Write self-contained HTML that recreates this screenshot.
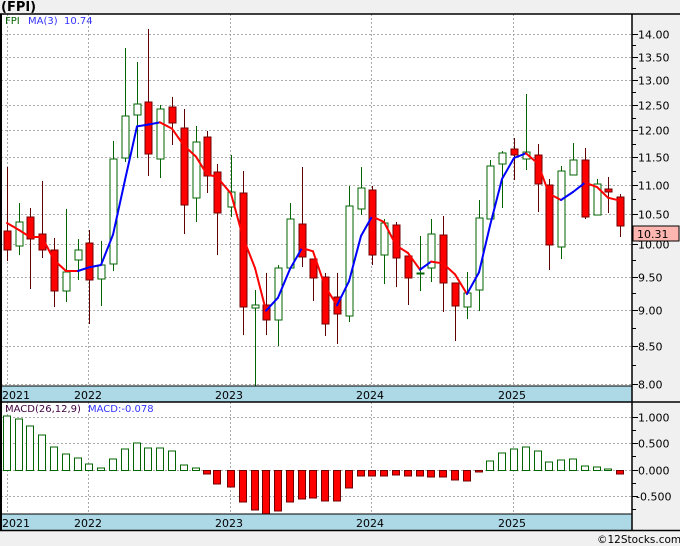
<!DOCTYPE html>
<html><head><meta charset="utf-8"><style>
html,body{margin:0;padding:0;background:#f0f0f0;width:680px;height:546px;overflow:hidden}
svg{display:block}
text{font-family:"DejaVu Sans","Liberation Sans",sans-serif}
</style></head><body>
<svg id="s" width="680" height="546" xmlns="http://www.w3.org/2000/svg">
<rect x="0" y="0" width="680" height="546" fill="#f0f0f0"/>
<rect x="1" y="14" width="631" height="516" fill="#fff"/>
<g id="g"></g>
<rect x="1" y="386" width="631" height="16" fill="#add8e6"/>
<rect x="1" y="514" width="631" height="16" fill="#add8e6"/>
<line x1="0" y1="14" x2="680" y2="14" stroke="#000" stroke-width="1.5"/>
<line x1="0" y1="386" x2="632" y2="386" stroke="#000"/>
<line x1="0" y1="402" x2="680" y2="402" stroke="#000" stroke-width="1.5"/>
<line x1="0" y1="514" x2="632" y2="514" stroke="#000"/>
<line x1="0" y1="530.5" x2="680" y2="530.5" stroke="#000" stroke-width="1.5"/>
<line x1="632" y1="14" x2="632" y2="531" stroke="#000" stroke-width="1.5"/>
<line x1="1" y1="14" x2="1" y2="531" stroke="#000" stroke-width="2"/>
<g font-size="11" fill="#000">
<text x="2" y="399">2021</text><text x="74" y="399">2022</text><text x="215" y="399">2023</text><text x="356" y="399">2024</text><text x="498" y="399">2025</text>
<text x="2" y="527">2021</text><text x="74" y="527">2022</text><text x="215" y="527">2023</text><text x="356" y="527">2024</text><text x="498" y="527">2025</text>
</g>
<text x="1" y="11" font-size="13" font-weight="bold">(FPI)</text>
<text x="5" y="24" font-size="10" fill="#006400">FPI</text>
<text x="28" y="24" font-size="10" fill="#3333ff">MA(3)</text>
<text x="64" y="24" font-size="10" fill="#3333ff">10.74</text>
<text x="5" y="412" font-size="10" fill="#400040">MACD(26,12,9)</text>
<text x="88" y="412" font-size="10" fill="#3333ff">MACD:-0.078</text>
<rect x="633" y="226" width="46" height="15" fill="#ffb6b0" stroke="#000"/>
<text x="637" y="238" font-size="11">10.31</text>
<text x="597" y="543" font-size="10.5">©12Stocks.com</text>
</svg>
<script>
var NS="http://www.w3.org/2000/svg",g=document.getElementById('g'),s=document.getElementById('s');
function el(t,a,p){var e=document.createElementNS(NS,t);for(var k in a)e.setAttribute(k,a[k]);(p||g).appendChild(e);return e;}
function py(p){return 34+625.4*(Math.log(14)-Math.log(p));}
[14,13.5,13,12.5,12,11.5,11,10.5,10,9.5,9,8.5,8].forEach(function(p){var y=Math.round(py(p))+.5;
 el('line',{x1:1,y1:y,x2:632,y2:y,stroke:'#aaa','stroke-dasharray':'2,2'});
 el('line',{x1:632,y1:y,x2:638,y2:y,stroke:'#000'});
 var t=el('text',{x:638,y:y+4,'font-size':'11',fill:'#000'},s);t.textContent=p.toFixed(2);});
[13.75,13.25,12.75,12.25,11.75,11.25,10.75,10.25,9.75,9.25,8.75,8.25].forEach(function(p){var y=Math.round(py(p))+.5;el('line',{x1:632,y1:y,x2:636,y2:y,stroke:'#000'});});
[[1,417],[0.5,443],[0,470],[-0.5,496]].forEach(function(a){var y=a[1]+.5;
 el('line',{x1:1,y1:y,x2:632,y2:y,stroke:'#aaa','stroke-dasharray':'2,2'});
 el('line',{x1:632,y1:y,x2:638,y2:y,stroke:'#000'});
 var t=el('text',{x:a[0]<0?636:638,y:y+4,'font-size':'11',fill:'#000'},s);t.textContent=a[0].toFixed(3);});
[430,456,483,509].forEach(function(y){el('line',{x1:632,y1:y+.5,x2:636,y2:y+.5,stroke:'#000'});});
[7.5,88.5,230.5,371.5,513.5].forEach(function(x){el('line',{x1:x,y1:14,x2:x,y2:386,stroke:'#aaa','stroke-dasharray':'2,2'});el('line',{x1:x,y1:402,x2:x,y2:514,stroke:'#aaa','stroke-dasharray':'2,2'});});
var C=[[7,'r',231,250,167,261],[19,'g',222,246,203,255],[30,'r',217,239,208,289],[42,'r',234,250,181,258],[54,'r',250,291,238,307],[66,'g',272,291,209,302],[78,'g',250,260,239,280],[89,'r',243,280,230,324],[101,'g',265,279,241,306],[113,'g',159,264,141,271],[125,'g',116,158,48,162],[137,'g',104,115,62,158],[148,'r',102,154,29,176],[160,'g',109,159,105,178],[172,'r',107,123,97,145],[184,'r',128,205,109,234],[196,'g',142,198,126,222],[207,'r',137,176,131,193],[217,'r',172,213,164,255],[231,'g',192,207,155,217],[243,'r',193,307,171,335],[255,'g',305,308,290,387],[266,'r',305,320,273,335],[278,'g',268,320,265,346],[290,'g',219,268,203,268],[302,'r',224,257,167,267],[313,'r',259,278,259,301],[325,'r',277,324,273,336],[337,'r',297,314,273,344],[349,'g',206,316,186,322],[361,'g',188,209,167,215],[372,'r',190,255,186,265],[384,'g',223,255,219,284],[396,'r',225,258,222,287],[408,'r',256,278,256,305],[420,'g',273,274,236,291],[431,'g',234,268,219,282],[443,'r',235,283,216,312],[455,'r',283,306,283,341],[467,'g',293,307,272,319],[479,'g',218,290,200,311],[490,'g',166,219,160,219],[502,'g',153,164,151,208],[514,'r',149,155,138,180],[526,'g',152,159,94,170],[538,'r',155,184,144,212],[549,'r',185,245,179,270],[561,'g',171,247,166,259],[573,'g',160,175,143,175],[585,'r',160,217,148,219],[597,'g',184,215,179,215],[608,'r',189,192,177,213],[620,'r',197,226,194,237]];
var closes=C.map(function(c){return c[1]=='r'?c[3]:c[2];});
var ma=closes.map(function(v,i){var a=closes.slice(Math.max(0,i-2),i+1);var sm=0;a.forEach(function(q){sm+=q});return sm/a.length;});
ma[0]=223;ma[1]=230;
C.forEach(function(c){var r=c[1]=='r';
 el('line',{x1:c[0]+.5,y1:c[4],x2:c[0]+.5,y2:c[5],stroke:r?'#600000':'#006400','stroke-width':1});
 el('rect',{x:c[0]-3,y:c[2],width:7,height:Math.max(1,c[3]-c[2]),fill:r?'#ff0000':'#fff',stroke:r?'#700000':'#006400','stroke-width':1});});
for(var i=1;i<C.length;i++){el('line',{x1:C[i-1][0],y1:ma[i-1],x2:C[i][0],y2:ma[i],stroke:ma[i]<ma[i-1]?'#0000ff':'#ff0000','stroke-width':2,'stroke-linecap':'round'});}
var M=[416,419,426,435,447,454,458,464,468,459,449,443,448,448,451,465,468,474,484,487,502,510,515,511,502,499,498,501,501,488,476,476,476,475,476,476,477,477,480,481,472,461,453,449,447,451,462,460,459,466,467,469,474];
M.forEach(function(y,i){var x=C[i][0]-3.5,z=470.5;var up=y<z;
 el('rect',{x:x,y:up?y:z,width:7,height:Math.max(1,Math.abs(y-z)),fill:up?'#fff':'#ff0000',stroke:up?'#006400':'#700000','stroke-width':1});});
</script>
</body></html>
